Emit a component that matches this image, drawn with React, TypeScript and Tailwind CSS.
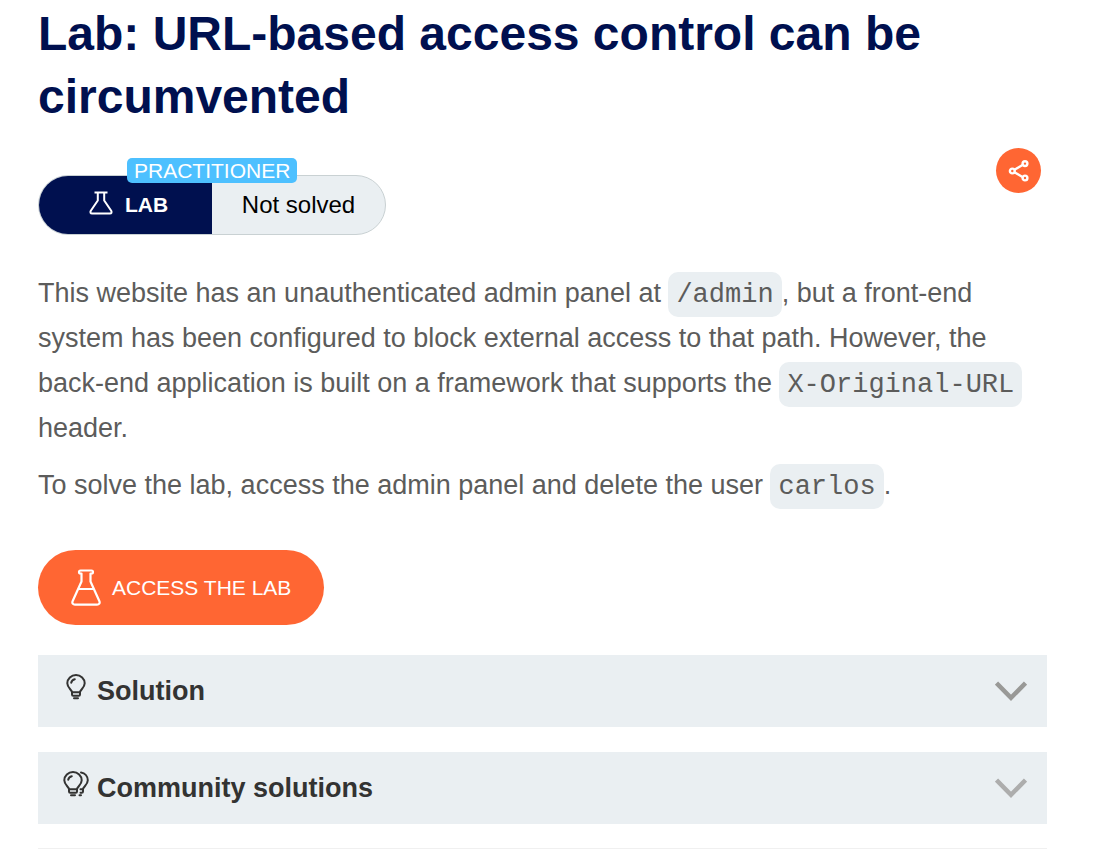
import type { ReactNode } from "react";

const sans = "font-['Liberation_Sans',Arial,sans-serif]";

function Code({ children }: { children: ReactNode }) {
  return (
    <code className="rounded-[10px] bg-[#eaeff2] px-2 pt-2 pb-[7px] font-['Liberation_Mono','Courier_New',monospace] text-[27px] leading-none whitespace-nowrap">
      {children}
    </code>
  );
}

function SmallFlask() {
  return (
    <svg width="24" height="24" viewBox="0 0 24 24" fill="none" stroke="currentColor" strokeWidth="2" strokeLinejoin="round" aria-hidden="true">
      <path d="M5.500 1.500h13M8.800 1.500v8L1.800 19.800c-.8 1.600-.3 2.700 1.300 2.700h17.800c1.600 0 2.100-1.100 1.300-2.700L15.200 9.500v-8" />
    </svg>
  );
}

function LargeFlask() {
  return (
    <svg width="30" height="38" viewBox="0 0 30 38" fill="none" stroke="currentColor" strokeWidth="2.200" strokeLinejoin="round" aria-hidden="true">
      <path d="M9.500 1.500h11c2 0 2 3 0 3h-1v8l8.800 19.500c1 2.200-.3 3.700-2.300 3.700H4c-2 0-3.300-1.500-2.300-3.700L10.500 12.500V4.500h-1c-2 0-2-3 0-3zM7 20h16" />
    </svg>
  );
}

const bulbOutline =
  "M6 18.300C6 15.800 1.300 14 1.300 9.300a8.700 8.300 0 0 1 17.400 0C18.700 14 14 15.800 14 18.300zM6 18.300v2.200c0 .8.500 1.200 1.200 1.200h5.600c.7 0 1.200-.4 1.200-1.200v-2.200";

function Bulb() {
  return (
    <svg width="20" height="26" viewBox="0 0 20 26" fill="none" stroke="currentColor" strokeWidth="2" strokeLinecap="round" strokeLinejoin="round" aria-hidden="true">
      <path d={bulbOutline} />
      <path d="M8 24.300h4M5.200 8.800a4.500 4.500 0 0 1 3.600-3.600" />
    </svg>
  );
}

function Bulbs() {
  return (
    <svg width="26" height="26" viewBox="0 0 26 26" fill="none" stroke="currentColor" strokeWidth="2" strokeLinecap="round" strokeLinejoin="round" aria-hidden="true">
      <path d={bulbOutline} />
      <path d="M8 24.300h4M5.200 8.800a4.500 4.500 0 0 1 3.600-3.600" />
      <path d="M18 1.400c4 .7 6.800 4 6.800 7.900 0 4.700-4.800 6.500-4.800 9h-2.500M20 18.300v2.200c0 .8-.5 1.200-1.200 1.200h-1.300M16.500 24.300h1.500" />
    </svg>
  );
}

function Panel({ title, icon, chevron }: { title: string; icon: ReactNode; chevron: string }) {
  return (
    <button type="button" className="flex h-[72px] w-full items-center bg-[#eaeff2] pr-5 pl-[25px] text-left text-[#333332]">
      <span className="flex w-[26px] justify-center pb-2">{icon}</span>
      <span className="ml-2 flex-1 text-[27px] leading-9 font-bold">{title}</span>
      <svg className={chevron} width="32" height="20" viewBox="0 0 32 20" fill="none" stroke="currentColor" strokeWidth="4.500" aria-hidden="true">
        <path d="M1.500 2L16 16.800L30.500 2" />
      </svg>
    </button>
  );
}

export default function App() {
  return (
    <main className={`${sans} min-h-screen bg-white pt-0.5 pr-[49px] pl-[38px] text-[#5c5c5b]`}>
      <h1 className="text-[48px] leading-[63px] font-bold text-[#00104f]">
        Lab: URL-based access control can be circumvented
      </h1>

      <div className="mt-5 flex items-start justify-between pr-1.5">
        <div className="relative mt-[27px] flex h-[60px] w-[348px] rounded-full border border-[#c9d1d3] bg-[#eaeff2]">
          <div className="flex w-1/2 items-center justify-center gap-3 rounded-l-full bg-[#00104f] pl-1.5 text-[21px] font-bold text-white">
            <span className="pb-1">
              <SmallFlask />
            </span>
            <span>LAB</span>
          </div>
          <div className="flex w-1/2 items-center justify-center text-[24px] text-black">Not solved</div>
          <span className="absolute -top-[18px] left-[88px] rounded-[5px] bg-[#4dc0ff] px-[7px] text-[21px] leading-[25px] text-white">
            PRACTITIONER
          </span>
        </div>
        <button type="button" aria-label="Share" className="flex size-[45px] items-center justify-center rounded-full bg-[#ff6633] text-white">
          <svg width="22" height="24" viewBox="0 0 22 24" fill="none" stroke="currentColor" strokeWidth="2.400" aria-hidden="true">
            <path d="M6.500 10.700L14.500 6M6.500 13.300L14.500 18" />
            <circle cx="4.300" cy="12" r="2.400" />
            <circle cx="17" cy="4.600" r="2.400" />
            <circle cx="17" cy="19" r="2.400" />
          </svg>
        </button>
      </div>

      <div className="mt-9 space-y-3 text-[27px] leading-[45px]">
        <p>
          This website has an unauthenticated admin panel at <Code>/admin</Code>, but a front-end system has been
          configured to block external access to that path. However, the back-end application is built on a framework
          that supports the <Code>X-Original-URL</Code> header.
        </p>
        <p>
          To solve the lab, access the admin panel and delete the user <Code>carlos</Code>.
        </p>
      </div>

      <a href="#lab" className="mt-[42px] flex h-[75px] w-fit items-center gap-[11px] rounded-full bg-[#ff6633] px-[33px] text-[21px] text-white">
        <LargeFlask />
        <span>ACCESS THE LAB</span>
      </a>

      <div className="mt-[30px] space-y-[25px] border-b border-[#f0f0f0] pb-6">
        <Panel title="Solution" icon={<Bulb />} chevron="text-[#999997]" />
        <Panel title="Community solutions" icon={<Bulbs />} chevron="text-[#adadad]" />
      </div>
    </main>
  );
}
